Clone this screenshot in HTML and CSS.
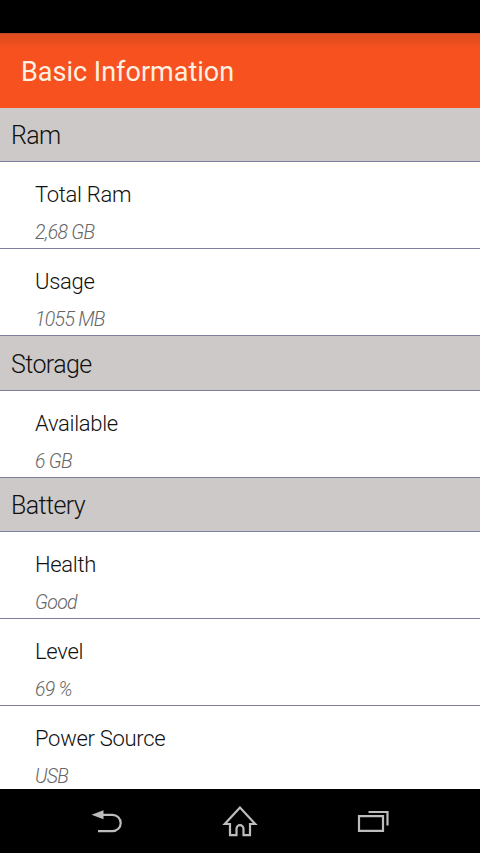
FILE: index.html
```html
<!DOCTYPE html>
<html lang="en">
<head>
<meta charset="utf-8">
<title>Basic Information</title>
<link rel="stylesheet" href="styles.css">
</head>
<body>
<div class="screen">
  <div class="status-bar"></div>
  <header class="app-bar"><h1>Basic Information</h1></header>
  <main class="list">
    <h2 class="section">Ram</h2>
    <div class="item"><div class="name">Total Ram</div><div class="value">2,68 GB</div></div>
    <div class="item"><div class="name">Usage</div><div class="value">1055 MB</div></div>
    <h2 class="section section-tall">Storage</h2>
    <div class="item"><div class="name">Available</div><div class="value">6 GB</div></div>
    <h2 class="section">Battery</h2>
    <div class="item"><div class="name">Health</div><div class="value">Good</div></div>
    <div class="item"><div class="name">Level</div><div class="value">69 %</div></div>
    <div class="item"><div class="name">Power Source</div><div class="value">USB</div></div>
  </main>
  <nav class="nav-bar">
    <svg class="nav-icon" viewBox="0 0 48 40"><path class="fill" d="M8.500 14.800 20.500 10.200v9z"/><path d="M20 14.800h9.500a8.200 8.200 0 0 1 0 16.400H15"/></svg>
    <svg class="nav-icon" viewBox="0 0 48 40"><path d="M24 7.500 8.800 24H14v11.200h6.500v-6.500a3.500 3.500 0 0 1 7 0v6.500H34V24h5.200z"/></svg>
    <svg class="nav-icon" viewBox="0 0 48 40"><path d="M10 16.200h24v14.600H10zM19.500 12h19v13.500"/></svg>
  </nav>
</div>
</body>
</html>
```

FILE: styles.css
```css
* { box-sizing: border-box; }
body { margin: 0; background: #000; font-family: Roboto, "Noto Sans", sans-serif; }
.screen { display: flex; flex-direction: column; height: 853px; overflow: hidden; }
.status-bar { flex: 0 0 33px; }
.app-bar {
  display: flex;
  flex: 0 0 75px;
  align-items: center;
  padding: 3px 22px 0 21px;
  background: linear-gradient(#b84a2c 0, #e54d20 2px, #e84e1f 8px, #f6511e 15px);
}
h1 { margin: 0; font-size: 27px; font-weight: 400; line-height: 32px; color: #fff0e2; }
.list { flex: 1; min-height: 0; overflow: hidden; background: #fff; }
.section {
  height: 54px;
  margin: 0;
  padding-left: 11px;
  border-bottom: 1px solid #7f7f9f;
  background: #cdc9c8;
  font-size: 25px;
  font-weight: 300;
  line-height: 55px;
  letter-spacing: -0.6px;
  color: #111;
}
.section-tall { height: 55px; line-height: 57px; }
.item { height: 87px; padding: 18px 0 0 35px; border-bottom: 1px solid #7f7f9f; }
.name { font-size: 22px; font-weight: 300; line-height: 30px; letter-spacing: -0.3px; color: #111; }
.value { margin-top: 11px; font-size: 19.500px; font-style: italic; font-weight: 300; line-height: 24px; letter-spacing: -0.7px; color: #666; }
.nav-bar { display: flex; flex: 0 0 64px; justify-content: center; gap: 85px; padding-top: 11px; }
.nav-icon { width: 48px; height: 40px; fill: none; stroke: #bdbdbd; stroke-width: 2.200; }
.fill { fill: #bdbdbd; stroke: none; }
```
